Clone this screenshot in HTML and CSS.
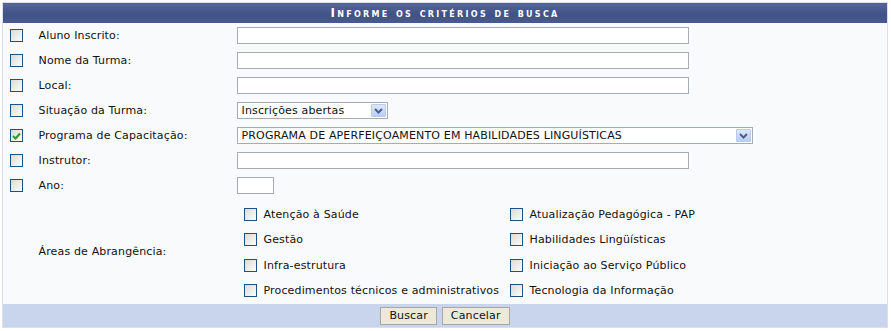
FILE: index.html
```html
<!DOCTYPE html>
<html lang="pt-BR">

<head>
    <meta charset="UTF-8">
    <meta name="viewport" content="width=device-width, initial-scale=1.0">
    <title>Busca de turmas</title>
    <link rel="stylesheet" href="styles.css">
</head>

<body>
    <table class="formulario">
        <colgroup>
            <col class="colchk">
            <col class="collbl">
            <col>
        </colgroup>
        <thead>
            <tr>
                <th colspan="3">Informe os critérios de busca</th>
            </tr>
        </thead>
        <tbody>
            <tr>
                <td class="tdchk"><span class="chk"></span></td>
                <td>Aluno Inscrito:</td>
                <td><div class="campo largo"></div></td>
            </tr>
            <tr>
                <td class="tdchk"><span class="chk"></span></td>
                <td>Nome da Turma:</td>
                <td><div class="campo largo"></div></td>
            </tr>
            <tr>
                <td class="tdchk"><span class="chk"></span></td>
                <td>Local:</td>
                <td><div class="campo largo"></div></td>
            </tr>
            <tr>
                <td class="tdchk"><span class="chk"></span></td>
                <td>Situação da Turma:</td>
                <td>
                    <div class="combo situacao">
                        <span class="valor">Inscrições abertas</span>
                        <span class="seta"><svg width="9" height="6" viewBox="0 0 9 6"><path d="M1 1 L4.5 4.5 L8 1" fill="none" stroke="#4d6185" stroke-width="2"/></svg></span>
                    </div>
                </td>
            </tr>
            <tr>
                <td class="tdchk"><span class="chk marcado"><svg width="9" height="8" viewBox="0 0 9 8"><path d="M1 4 L3.5 6.5 L8 1.5" fill="none" stroke="#21a121" stroke-width="2"/></svg></span></td>
                <td>Programa de Capacitação:</td>
                <td>
                    <div class="combo programa">
                        <span class="valor">PROGRAMA DE APERFEIÇOAMENTO EM HABILIDADES LINGUÍSTICAS</span>
                        <span class="seta"><svg width="9" height="6" viewBox="0 0 9 6"><path d="M1 1 L4.5 4.5 L8 1" fill="none" stroke="#4d6185" stroke-width="2"/></svg></span>
                    </div>
                </td>
            </tr>
            <tr>
                <td class="tdchk"><span class="chk"></span></td>
                <td>Instrutor:</td>
                <td><div class="campo largo"></div></td>
            </tr>
            <tr>
                <td class="tdchk"><span class="chk"></span></td>
                <td>Ano:</td>
                <td><div class="campo ano"></div></td>
            </tr>
            <tr class="areas">
                <td class="tdchk"></td>
                <td>Áreas de Abrangência:</td>
                <td>
                    <div class="grade">
                        <label class="item"><span class="chk"></span>Atenção à Saúde</label>
                        <label class="item"><span class="chk"></span>Atualização Pedagógica - PAP</label>
                        <label class="item"><span class="chk"></span>Gestão</label>
                        <label class="item"><span class="chk"></span>Habilidades Lingüísticas</label>
                        <label class="item"><span class="chk"></span>Infra-estrutura</label>
                        <label class="item"><span class="chk"></span>Iniciação ao Serviço Público</label>
                        <label class="item"><span class="chk"></span>Procedimentos técnicos e administrativos</label>
                        <label class="item"><span class="chk"></span>Tecnologia da Informação</label>
                    </div>
                </td>
            </tr>
        </tbody>
        <tfoot>
            <tr>
                <td colspan="3">
                    <div class="botoes">
                        <button class="btn">Buscar</button>
                        <button class="btn">Cancelar</button>
                    </div>
                </td>
            </tr>
        </tfoot>
    </table>
</body>

</html>
```

FILE: styles.css
```css
body {
    margin: 2px;
    background: #fff;
    font-family: "DejaVu Sans", Verdana, sans-serif;
    font-size: 11px;
    letter-spacing: 0.15px;
    color: #111;
}

.formulario {
    width: 886px;
    border-collapse: collapse;
    table-layout: fixed;
    background-color: #f9fafc;
    border: 1px solid #dcdfe6;
}

.colchk {
    width: 36px;
}

.collbl {
    width: 198px;
}

.formulario th {
    height: 20px;
    padding: 0;
    background: linear-gradient(to bottom, #56669a, #405186 55%, #4a5b8f);
    color: #fff;
    font-weight: bold;
    font-variant: small-caps;
    font-size: 12px;
    letter-spacing: 2.3px;
    text-align: center;
}

.formulario td {
    padding: 0;
    height: 25px;
    vertical-align: middle;
}

.tdchk {
    padding-left: 7px !important;
}

.chk {
    display: inline-flex;
    align-items: center;
    justify-content: center;
    box-sizing: border-box;
    width: 13px;
    height: 13px;
    border: 1px solid #1c5180;
    background: linear-gradient(135deg, #dcdcd6, #fbfbf9);
    vertical-align: middle;
}

.campo {
    box-sizing: border-box;
    height: 17px;
    background: #fff;
    border: 1px solid #a5acb2;
}

.largo {
    width: 452px;
}

.ano {
    width: 37px;
}

.combo {
    box-sizing: border-box;
    display: flex;
    align-items: center;
    height: 17px;
    background: #fff;
    border: 1px solid #a5acb2;
    padding: 0 1px 0 4px;
}

.situacao {
    width: 151px;
}

.programa {
    width: 516px;
}

.combo .valor {
    flex: 1;
    white-space: nowrap;
    overflow: hidden;
}

.seta {
    display: flex;
    align-items: center;
    justify-content: center;
    box-sizing: border-box;
    width: 15px;
    height: 13px;
    border: 1px solid #b9cbf2;
    border-radius: 1px;
    background: linear-gradient(to bottom, #dde8fd, #bacdf7);
}

.areas td {
    height: 106px;
}

.grade {
    display: grid;
    grid-template-columns: 266px auto;
    grid-auto-rows: 25.3px;
    padding: 4px 0 1px;
}

.item {
    display: flex;
    align-items: center;
    gap: 7px;
    padding-left: 7px;
    white-space: nowrap;
}

.formulario tfoot td {
    height: 23px;
    background-color: #c8d5ec;
}

.botoes {
    display: flex;
    justify-content: center;
    gap: 5px;
}

.btn {
    font-family: "DejaVu Sans", Verdana, sans-serif;
    font-size: 11px;
    letter-spacing: 0.15px;
    color: #111;
    height: 18px;
    padding: 0 8px;
    background-color: #ece9d8;
    border: 1px solid #a7a6aa;
    border-radius: 0;
    cursor: pointer;
}
```
